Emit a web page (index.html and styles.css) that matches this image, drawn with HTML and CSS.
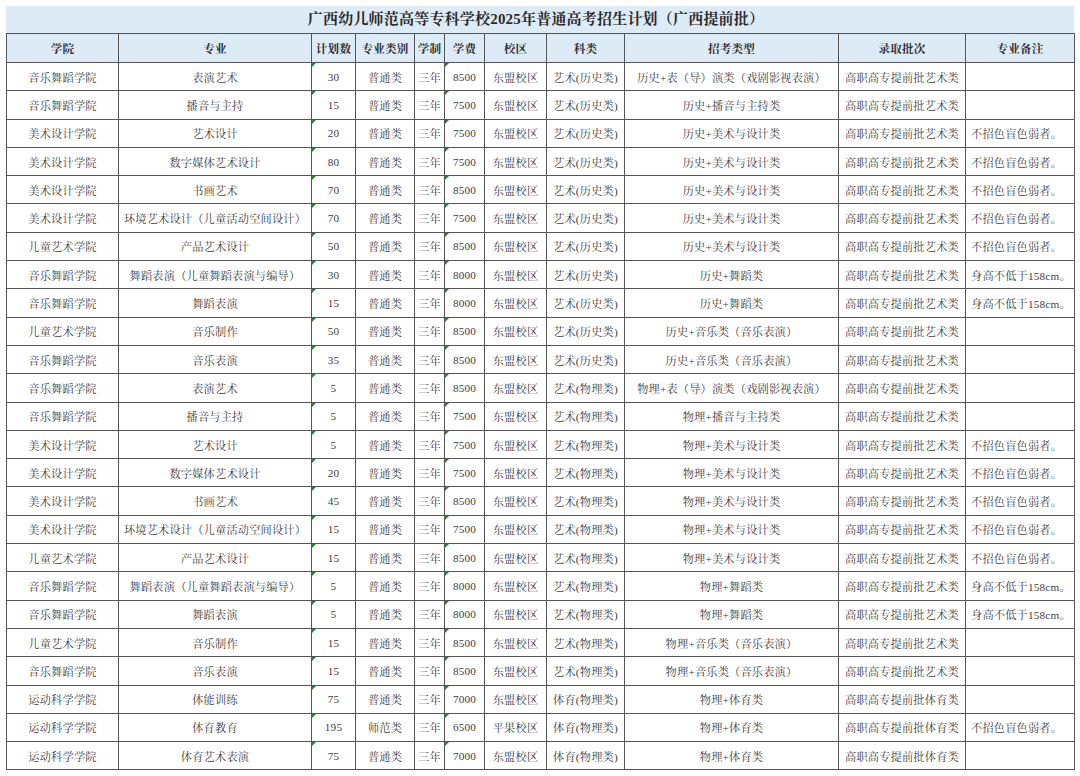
FILE: index.html
```html
<!DOCTYPE html>
<html lang="zh-CN">
<head>
<meta charset="utf-8">
<title>广西幼儿师范高等专科学校2025年普通高考招生计划（广西提前批）</title>
<link rel="stylesheet" href="styles.css">
</head>
<body>
<div class="sheet">
  <div class="title">广西幼儿师范高等专科学校2025年普通高考招生计划（广西提前批）</div>
  <table class="plan">
    <colgroup>
      <col class="c-college"><col class="c-major"><col class="c-num"><col class="c-type"><col class="c-years"><col class="c-fee"><col class="c-campus"><col class="c-subject"><col class="c-exam"><col class="c-batch"><col class="c-note">
    </colgroup>
    <thead>
      <tr><th>学院</th><th>专业</th><th>计划数</th><th>专业类别</th><th>学制</th><th>学费</th><th>校区</th><th>科类</th><th>招考类型</th><th>录取批次</th><th>专业备注</th></tr>
    </thead>
    <tbody>
      <tr><td>音乐舞蹈学院</td><td>表演艺术</td><td class="flag">30</td><td>普通类</td><td>三年</td><td class="flag">8500</td><td>东盟校区</td><td>艺术(历史类)</td><td>历史+表（导）演类（戏剧影视表演）</td><td>高职高专提前批艺术类</td><td class="note"></td></tr>
      <tr><td>音乐舞蹈学院</td><td>播音与主持</td><td class="flag">15</td><td>普通类</td><td>三年</td><td class="flag">7500</td><td>东盟校区</td><td>艺术(历史类)</td><td>历史+播音与主持类</td><td>高职高专提前批艺术类</td><td class="note"></td></tr>
      <tr><td>美术设计学院</td><td>艺术设计</td><td class="flag">20</td><td>普通类</td><td>三年</td><td class="flag">7500</td><td>东盟校区</td><td>艺术(历史类)</td><td>历史+美术与设计类</td><td>高职高专提前批艺术类</td><td class="note">不招色盲色弱者。</td></tr>
      <tr><td>美术设计学院</td><td>数字媒体艺术设计</td><td class="flag">80</td><td>普通类</td><td>三年</td><td class="flag">7500</td><td>东盟校区</td><td>艺术(历史类)</td><td>历史+美术与设计类</td><td>高职高专提前批艺术类</td><td class="note">不招色盲色弱者。</td></tr>
      <tr><td>美术设计学院</td><td>书画艺术</td><td class="flag">70</td><td>普通类</td><td>三年</td><td class="flag">8500</td><td>东盟校区</td><td>艺术(历史类)</td><td>历史+美术与设计类</td><td>高职高专提前批艺术类</td><td class="note">不招色盲色弱者。</td></tr>
      <tr><td>美术设计学院</td><td>环境艺术设计（儿童活动空间设计）</td><td class="flag">70</td><td>普通类</td><td>三年</td><td class="flag">7500</td><td>东盟校区</td><td>艺术(历史类)</td><td>历史+美术与设计类</td><td>高职高专提前批艺术类</td><td class="note">不招色盲色弱者。</td></tr>
      <tr><td>儿童艺术学院</td><td>产品艺术设计</td><td class="flag">50</td><td>普通类</td><td>三年</td><td class="flag">8500</td><td>东盟校区</td><td>艺术(历史类)</td><td>历史+美术与设计类</td><td>高职高专提前批艺术类</td><td class="note">不招色盲色弱者。</td></tr>
      <tr><td>音乐舞蹈学院</td><td>舞蹈表演（儿童舞蹈表演与编导）</td><td class="flag">30</td><td>普通类</td><td>三年</td><td class="flag">8000</td><td>东盟校区</td><td>艺术(历史类)</td><td>历史+舞蹈类</td><td>高职高专提前批艺术类</td><td class="note">身高不低于158cm。</td></tr>
      <tr><td>音乐舞蹈学院</td><td>舞蹈表演</td><td class="flag">15</td><td>普通类</td><td>三年</td><td class="flag">8000</td><td>东盟校区</td><td>艺术(历史类)</td><td>历史+舞蹈类</td><td>高职高专提前批艺术类</td><td class="note">身高不低于158cm。</td></tr>
      <tr><td>儿童艺术学院</td><td>音乐制作</td><td class="flag">50</td><td>普通类</td><td>三年</td><td class="flag">8500</td><td>东盟校区</td><td>艺术(历史类)</td><td>历史+音乐类（音乐表演）</td><td>高职高专提前批艺术类</td><td class="note"></td></tr>
      <tr><td>音乐舞蹈学院</td><td>音乐表演</td><td class="flag">35</td><td>普通类</td><td>三年</td><td class="flag">8500</td><td>东盟校区</td><td>艺术(历史类)</td><td>历史+音乐类（音乐表演）</td><td>高职高专提前批艺术类</td><td class="note"></td></tr>
      <tr><td>音乐舞蹈学院</td><td>表演艺术</td><td class="flag">5</td><td>普通类</td><td>三年</td><td class="flag">8500</td><td>东盟校区</td><td>艺术(物理类)</td><td>物理+表（导）演类（戏剧影视表演）</td><td>高职高专提前批艺术类</td><td class="note"></td></tr>
      <tr><td>音乐舞蹈学院</td><td>播音与主持</td><td class="flag">5</td><td>普通类</td><td>三年</td><td class="flag">7500</td><td>东盟校区</td><td>艺术(物理类)</td><td>物理+播音与主持类</td><td>高职高专提前批艺术类</td><td class="note"></td></tr>
      <tr><td>美术设计学院</td><td>艺术设计</td><td class="flag">5</td><td>普通类</td><td>三年</td><td class="flag">7500</td><td>东盟校区</td><td>艺术(物理类)</td><td>物理+美术与设计类</td><td>高职高专提前批艺术类</td><td class="note">不招色盲色弱者。</td></tr>
      <tr><td>美术设计学院</td><td>数字媒体艺术设计</td><td class="flag">20</td><td>普通类</td><td>三年</td><td class="flag">7500</td><td>东盟校区</td><td>艺术(物理类)</td><td>物理+美术与设计类</td><td>高职高专提前批艺术类</td><td class="note">不招色盲色弱者。</td></tr>
      <tr><td>美术设计学院</td><td>书画艺术</td><td class="flag">45</td><td>普通类</td><td>三年</td><td class="flag">8500</td><td>东盟校区</td><td>艺术(物理类)</td><td>物理+美术与设计类</td><td>高职高专提前批艺术类</td><td class="note">不招色盲色弱者。</td></tr>
      <tr><td>美术设计学院</td><td>环境艺术设计（儿童活动空间设计）</td><td class="flag">15</td><td>普通类</td><td>三年</td><td class="flag">7500</td><td>东盟校区</td><td>艺术(物理类)</td><td>物理+美术与设计类</td><td>高职高专提前批艺术类</td><td class="note">不招色盲色弱者。</td></tr>
      <tr><td>儿童艺术学院</td><td>产品艺术设计</td><td class="flag">15</td><td>普通类</td><td>三年</td><td class="flag">8500</td><td>东盟校区</td><td>艺术(物理类)</td><td>物理+美术与设计类</td><td>高职高专提前批艺术类</td><td class="note">不招色盲色弱者。</td></tr>
      <tr><td>音乐舞蹈学院</td><td>舞蹈表演（儿童舞蹈表演与编导）</td><td class="flag">5</td><td>普通类</td><td>三年</td><td class="flag">8000</td><td>东盟校区</td><td>艺术(物理类)</td><td>物理+舞蹈类</td><td>高职高专提前批艺术类</td><td class="note">身高不低于158cm。</td></tr>
      <tr><td>音乐舞蹈学院</td><td>舞蹈表演</td><td class="flag">5</td><td>普通类</td><td>三年</td><td class="flag">8000</td><td>东盟校区</td><td>艺术(物理类)</td><td>物理+舞蹈类</td><td>高职高专提前批艺术类</td><td class="note">身高不低于158cm。</td></tr>
      <tr><td>儿童艺术学院</td><td>音乐制作</td><td class="flag">15</td><td>普通类</td><td>三年</td><td class="flag">8500</td><td>东盟校区</td><td>艺术(物理类)</td><td>物理+音乐类（音乐表演）</td><td>高职高专提前批艺术类</td><td class="note"></td></tr>
      <tr><td>音乐舞蹈学院</td><td>音乐表演</td><td class="flag">15</td><td>普通类</td><td>三年</td><td class="flag">8500</td><td>东盟校区</td><td>艺术(物理类)</td><td>物理+音乐类（音乐表演）</td><td>高职高专提前批艺术类</td><td class="note"></td></tr>
      <tr><td>运动科学学院</td><td>体能训练</td><td class="flag">75</td><td>普通类</td><td>三年</td><td class="flag">7000</td><td>东盟校区</td><td>体育(物理类)</td><td>物理+体育类</td><td>高职高专提前批体育类</td><td class="note"></td></tr>
      <tr><td>运动科学学院</td><td>体育教育</td><td class="flag">195</td><td>师范类</td><td>三年</td><td class="flag">6500</td><td>平果校区</td><td>体育(物理类)</td><td>物理+体育类</td><td>高职高专提前批体育类</td><td class="note">不招色盲色弱者。</td></tr>
      <tr><td>运动科学学院</td><td>体育艺术表演</td><td class="flag">75</td><td>普通类</td><td>三年</td><td class="flag">7000</td><td>东盟校区</td><td>体育(物理类)</td><td>物理+体育类</td><td>高职高专提前批体育类</td><td class="note"></td></tr>
    </tbody>
  </table>
</div>
</body>
</html>
```
FILE: styles.css
```css
html, body {
  margin: 0;
  padding: 0;
  background: #ffffff;
}

body {
  font-family: "Liberation Serif", "Noto Serif CJK SC", "Noto Sans CJK SC", serif;
  color: #404040;
}

.sheet {
  width: 1068px;
  padding: 6px 0 0 6px;
}

.title {
  height: 27px;
  line-height: 27px;
  background: #ddebf7;
  text-align: center;
  font-size: 15px;
  font-weight: bold;
  letter-spacing: 0.2px;
  color: #2b2b2b;
  padding-right: 8px;
}

.plan {
  width: 1068px;
  border-collapse: collapse;
  table-layout: fixed;
}

.c-college { width: 112px; }
.c-major { width: 193px; }
.c-num { width: 44px; }
.c-type { width: 59px; }
.c-years { width: 30px; }
.c-fee { width: 40px; }
.c-campus { width: 62px; }
.c-subject { width: 78px; }
.c-exam { width: 214px; }
.c-batch { width: 127px; }
.c-note { width: 109px; }

.plan th,
.plan td {
  border: 1px solid #555555;
  padding: 0;
  text-align: center;
  white-space: nowrap;
  overflow: hidden;
  font-size: 11.2px;
  letter-spacing: 0.2px;
}

.plan thead tr {
  height: 29px;
}

.plan th {
  background: #ddebf7;
  font-weight: bold;
  font-size: 11.6px;
  color: #2e2e2e;
}

.plan tbody tr {
  height: 28.3px;
}

.plan td.note {
  text-align: left;
  padding-left: 5px;
}

.plan td.flag {
  position: relative;
}

.plan td.flag::before {
  content: "";
  position: absolute;
  left: 0;
  top: 0;
  border-top: 4px solid #1f8a2a;
  border-right: 4px solid transparent;
}
```
